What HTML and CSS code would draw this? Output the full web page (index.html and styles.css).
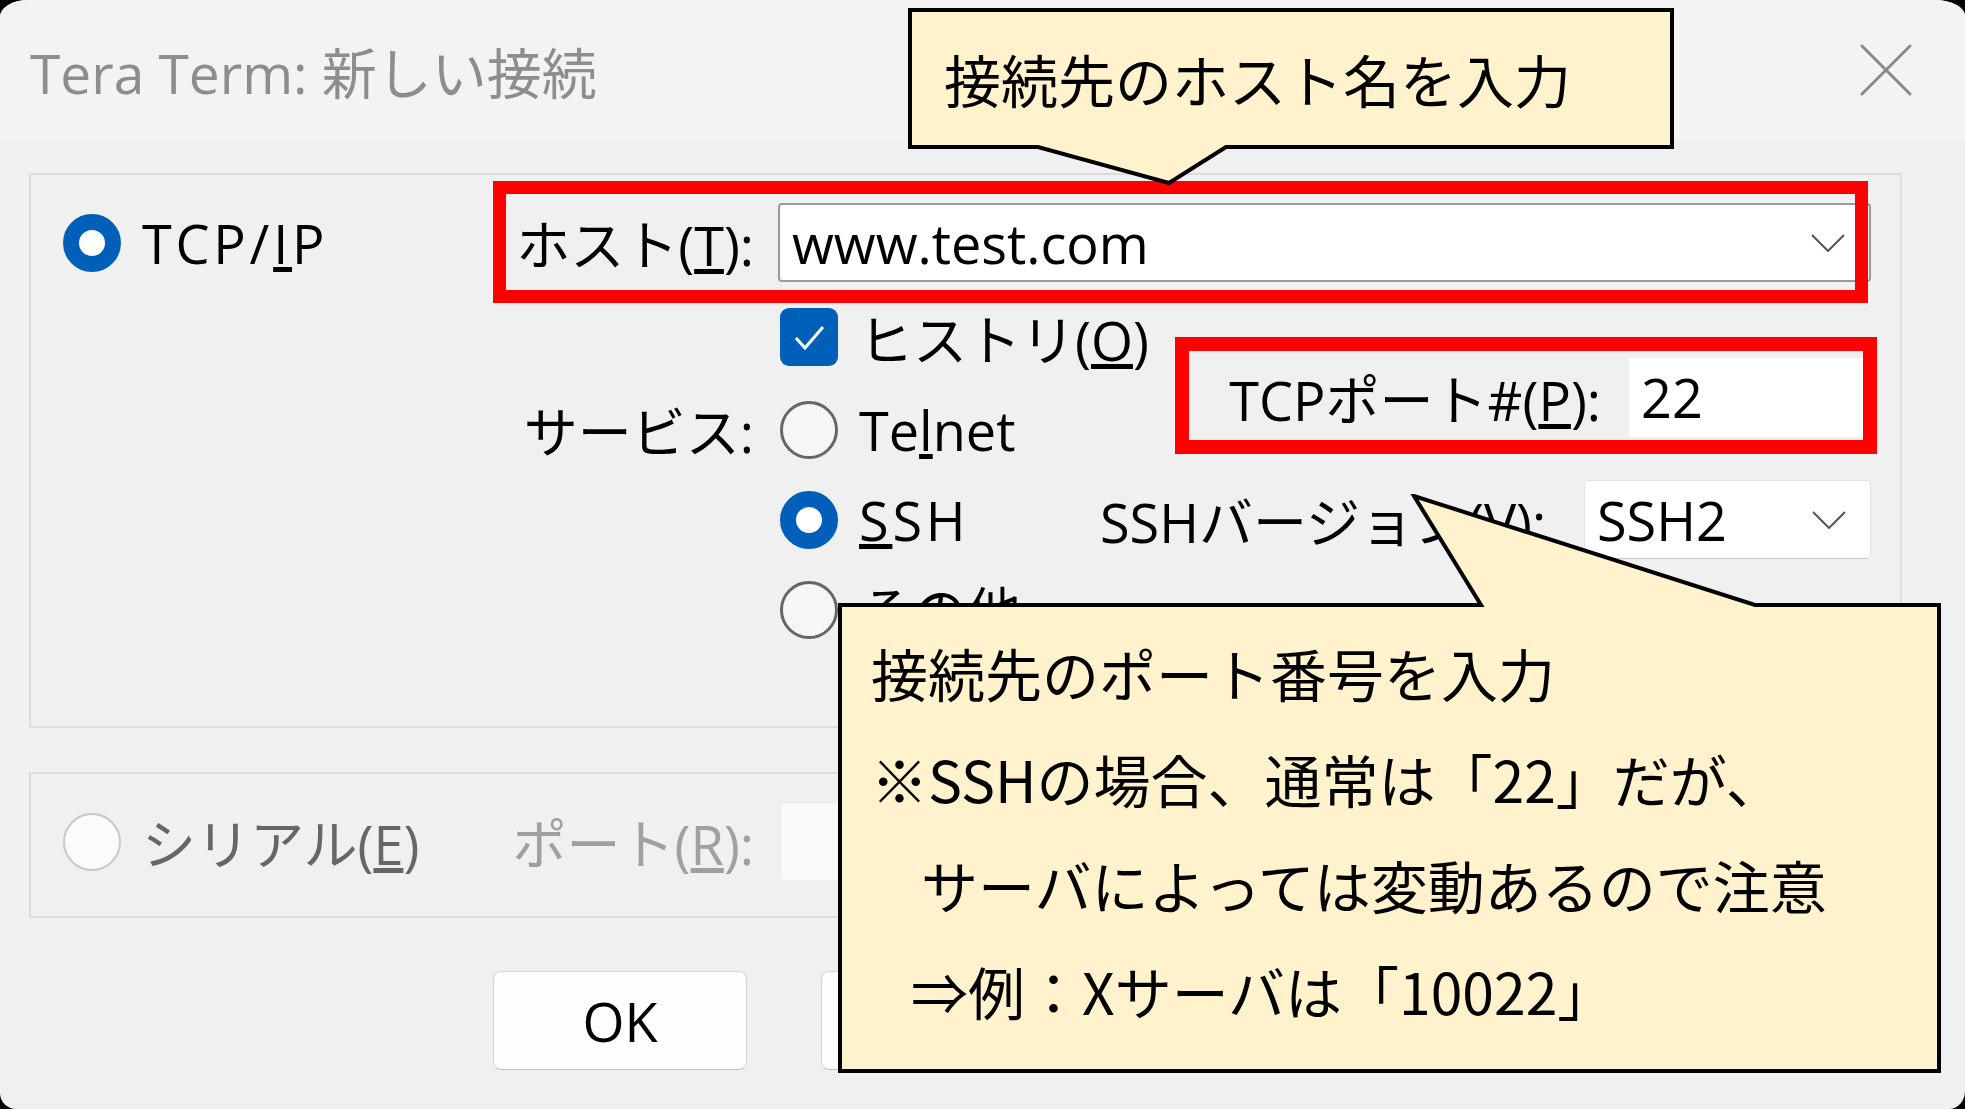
FILE: index.html
```html
<!DOCTYPE html>
<html lang="ja">
<head>
    <meta charset="UTF-8">
    <title>Tera Term: 新しい接続</title>
    <link rel="stylesheet" href="styles.css">
</head>
<body>
    <div class="dialog">
        <!-- タイトルバー -->
        <div class="titlebar">
            <span class="title">Tera Term: 新しい接続</span>
            <svg class="close" width="52" height="52" viewBox="0 0 52 52">
                <path d="M2 2 L50 50 M50 2 L2 50" stroke="#8a8a8a" stroke-width="3" fill="none" stroke-linecap="round"/>
            </svg>
        </div>

        <!-- TCP/IP グループ -->
        <div class="group group-tcp">
            <div class="radio-item tcp"><span class="radio on"></span><span class="wide">TCP/<u>I</u>P</span></div>
            <span class="label host-label">ホスト(<u>T</u>):</span>
            <div class="combo host-combo">
                <span>www.test.com</span>
                <svg class="chevron" width="34" height="18" viewBox="0 0 34 18"><polyline points="1,1 17,17 33,1" fill="none" stroke="#555" stroke-width="2"/></svg>
            </div>
            <div class="check-item history">
                <span class="check">
                    <svg width="58" height="58" viewBox="0 0 58 58"><polyline points="16,30 25,40 43,19" fill="none" stroke="#fff" stroke-width="3"/></svg>
                </span>
                <span>ヒストリ(<u>O</u>)</span>
            </div>
            <div class="port-field">
                <span>TCPポート#(<u>P</u>):</span>
                <span class="edit">22</span>
            </div>
            <span class="label service-label">サービス:</span>
            <div class="radio-item telnet"><span class="radio"></span><span>Te<u>l</u>net</span></div>
            <div class="radio-item ssh"><span class="radio on"></span><span class="wide"><u>S</u>SH</span></div>
            <div class="ssh-version">
                <span>SSHバージョン(<u>V</u>):</span>
                <div class="combo ver-combo">
                    <span>SSH2</span>
                    <svg class="chevron" width="34" height="18" viewBox="0 0 34 18"><polyline points="1,1 17,17 33,1" fill="none" stroke="#555" stroke-width="2"/></svg>
                </div>
            </div>
            <div class="radio-item other"><span class="radio"></span><span>その他</span></div>
        </div>

        <!-- シリアル グループ -->
        <div class="group group-serial">
            <div class="radio-item disabled"><span class="radio"></span><span>シリアル(<u>E</u>)</span></div>
            <span class="label disabled-label">ポート(<u>R</u>):</span>
            <div class="combo serial-combo"></div>
        </div>

        <div class="buttons">
            <button class="btn">OK</button>
            <button class="btn btn-narrow">キャンセル</button>
            <button class="btn">ヘルプ(<u>H</u>)</button>
        </div>

        <!-- 注釈の赤枠 -->
        <div class="mark mark-host"></div>
        <div class="mark mark-port"></div>

        <!-- 吹き出し -->
        <div class="callout callout-host">
            <svg class="callout-shape" width="766" height="177" viewBox="0 0 766 177">
                <path d="M2 2 H764 V139 H318 L261 175 L130 139 H2 Z" fill="#fff2cc" stroke="#000" stroke-width="4"/>
            </svg>
            <div class="callout-text">接続先のホスト名を入力</div>
        </div>

        <div class="callout callout-port">
            <svg class="callout-shape" width="1103" height="579" viewBox="0 0 1103 579">
                <path d="M2 111 H643 L576 2 L917 111 H1101 V577 H2 Z" fill="#fff2cc" stroke="#000" stroke-width="4"/>
            </svg>
            <div class="callout-text">
                <div>接続先のポート番号を入力</div>
                <div>※SSHの場合、通常は「22」だが、</div>
                <div class="indent-wide">サーバによっては変動あるので注意</div>
                <div class="indent-half">⇒例：Xサーバは「10022」</div>
            </div>
        </div>
    </div>
</body>
</html>
```

FILE: styles.css
```css
/* 全体 */
body {
    margin: 0;
    background: #000;
    font-family: 'Open Sans', 'Noto Sans CJK JP', sans-serif;
}

/* ダイアログ本体 */
.dialog {
    position: relative;
    width: 1965px;
    height: 1109px;
    background: #f0f0f0;
    border-radius: 28px 30px 16px 16px / 17px 16px 18px 16px;
    overflow: hidden;
    padding: 0 63px 0 29px;
    box-sizing: border-box;
    font-size: 54px;
    color: #000;
}

/* タイトルバー */
.titlebar {
    display: flex;
    justify-content: space-between;
    align-items: center;
    height: 140px;
    margin: 0 -63px 0 -29px;
    padding: 0 53px 0 30px;
    background: #f3f3f3;
}

.title {
    font-size: 55px;
    color: #8d8d8d;
}

/* グループボックス */
.group {
    display: grid;
    grid-template-columns: 417px 300px 310px 1fr;
    align-items: center;
    border: 2px solid #dcdcdc;
    padding-left: 32px;
    padding-right: 29px;
}

.group-tcp {
    margin-top: 33px;
    padding-top: 28px;
    padding-bottom: 79px;
    grid-template-rows: 79px 110px 75px 105px 75px;
}

.group-serial {
    margin-top: 44px;
    padding-top: 29px;
    padding-bottom: 36px;
    grid-template-rows: 77px;
}

.label {
    grid-column: 2;
    text-align: right;
    padding-right: 26px;
    white-space: nowrap;
}

/* ラジオボタン */
.radio-item, .check-item {
    display: flex;
    align-items: center;
    gap: 21px;
    white-space: nowrap;
}

.wide {
    letter-spacing: 0.07em;
}

.radio {
    width: 58px;
    height: 58px;
    border-radius: 50%;
    box-sizing: border-box;
    border: 3px solid #666;
    background: #f6f6f6;
    flex: none;
}

.radio.on {
    border: 16px solid #005fb8;
    background: #fff;
}

.check {
    width: 58px;
    height: 58px;
    border-radius: 9px;
    background: #005fb8;
    flex: none;
}

.check svg {
    display: block;
}

.tcp { grid-column: 1; grid-row: 1; }
.host-label { grid-row: 1; }
.host-combo { grid-column: 3 / 5; grid-row: 1; }
.history { grid-column: 3; grid-row: 2; }
.service-label { grid-row: 3; }
.telnet { grid-column: 3; grid-row: 3; }
.ssh { grid-column: 3; grid-row: 4; }
.other { grid-column: 3; grid-row: 5; }

/* コンボボックス */
.combo {
    display: flex;
    justify-content: space-between;
    align-items: center;
    height: 79px;
    box-sizing: border-box;
    background: #fff;
    border: 1px solid #e3e3e3;
    border-bottom-color: #c8c8c8;
    border-radius: 5px;
    padding: 0 24px 0 12px;
}

.host-combo {
    margin-left: -2px;
    border: 2px solid #9a9a9a;
    border-radius: 4px;
}

.ver-combo {
    width: 287px;
}

/* TCPポート */
.port-field {
    grid-column: 4;
    grid-row: 2 / 4;
    justify-self: end;
    align-self: start;
    margin-top: 76px;
    display: flex;
    align-items: center;
    gap: 28px;
    white-space: nowrap;
}

.edit {
    width: 242px;
    height: 79px;
    line-height: 79px;
    background: #fff;
    padding-left: 12px;
    box-sizing: border-box;
}

/* SSHバージョン */
.ssh-version {
    grid-column: 4;
    grid-row: 4;
    display: flex;
    justify-content: space-between;
    align-items: center;
    padding-left: 10px;
    white-space: nowrap;
}

/* シリアル（無効） */
.disabled {
    color: #666;
}

.disabled .radio {
    border: 2px solid #c8c8c8;
    background: #fbfbfb;
}

.disabled-label {
    color: #a0a0a0;
}

.serial-combo {
    grid-column: 3;
    width: 310px;
    background: #f9f9f9;
    border-color: #ececec;
}

/* ボタン */
.buttons {
    display: flex;
    gap: 74px;
    margin-top: 53px;
    padding-left: 464px;
}

.btn {
    width: 254px;
    height: 99px;
    padding: 0;
    font: inherit;
    white-space: nowrap;
    overflow: hidden;
    background: #fdfdfd;
    border: 1px solid #d6d6d6;
    border-bottom-color: #c2c2c2;
    border-radius: 8px;
}

.btn-narrow {
    font-feature-settings: "palt";
    letter-spacing: -6px;
}

/* 赤枠 */
.mark {
    position: absolute;
    border: 13px solid #f00;
    box-sizing: border-box;
}

.mark-host {
    left: 493px;
    top: 181px;
    width: 1375px;
    height: 122px;
}

.mark-port {
    left: 1175px;
    top: 337px;
    width: 702px;
    height: 117px;
    border-width: 14px;
}

/* 吹き出し */
.callout {
    position: absolute;
    font-family: 'Noto Sans CJK JP', sans-serif;
    font-size: 57px;
    white-space: nowrap;
}

.callout-shape {
    position: absolute;
    left: 0;
    top: 0;
}

.callout-text {
    position: relative;
}

.callout-host {
    left: 908px;
    top: 8px;
    width: 766px;
    height: 141px;
}

.callout-host .callout-text {
    line-height: 141px;
    padding-left: 36px;
}

.callout-port {
    left: 838px;
    top: 494px;
    width: 1103px;
    height: 579px;
}

.callout-port .callout-text {
    line-height: 106px;
    padding: 125px 0 0 33px;
}

.indent-wide {
    padding-left: 50px;
}

.indent-half {
    padding-left: 40px;
}
```
